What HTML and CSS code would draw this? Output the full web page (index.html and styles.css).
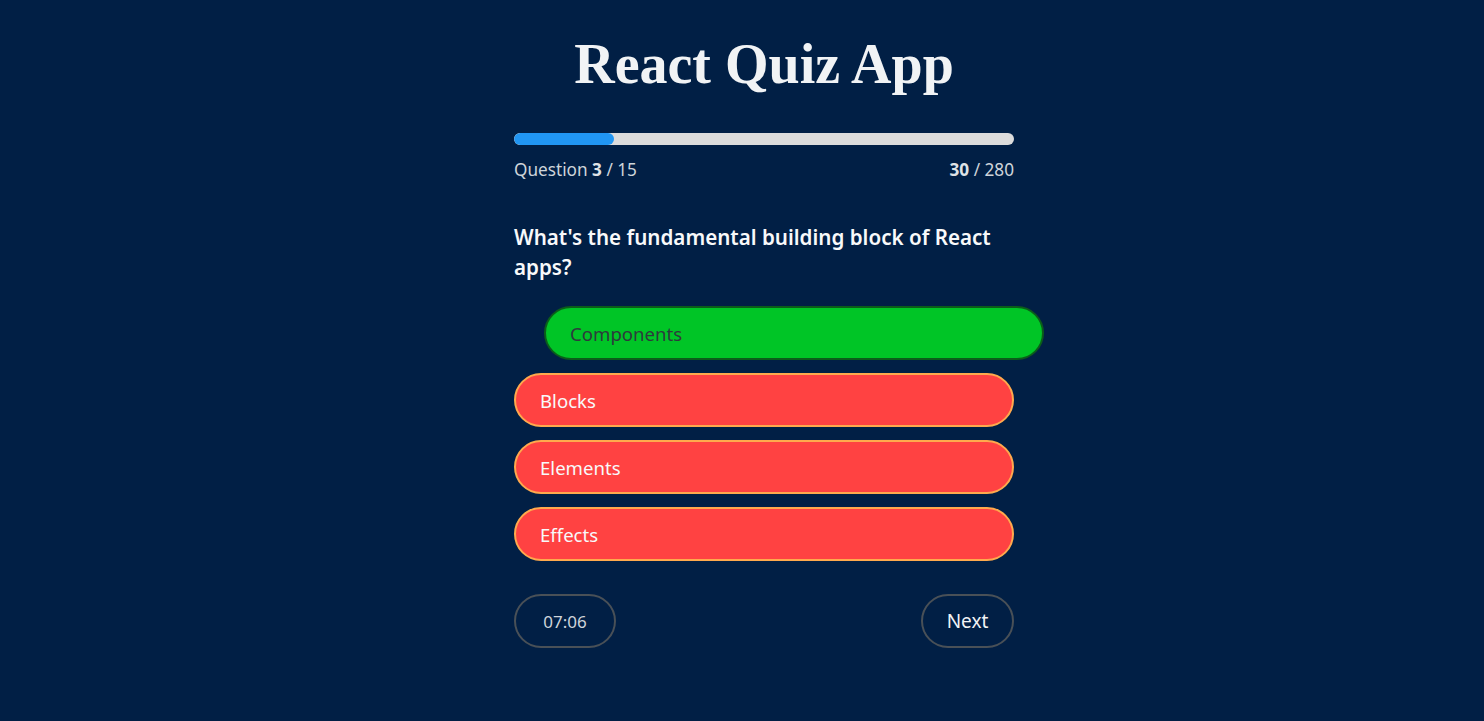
FILE: index.html
```html
<!DOCTYPE html>
<html lang="en">
<head>
<meta charset="utf-8">
<title>React Quiz App</title>
<link rel="stylesheet" href="styles.css">
</head>
<body>
<div class="app">
  <header class="app-header">
    <h1>React Quiz App</h1>
  </header>
  <main class="main">
    <div class="progress">
      <div class="progress-track"><div class="progress-fill" style="width: 20%"></div></div>
      <div class="progress-info">
        <span>Question <strong>3</strong> / 15</span>
        <span><strong>30</strong> / 280</span>
      </div>
    </div>
    <h4 class="question">What's the fundamental building block of React apps?</h4>
    <div class="options">
      <button class="option correct answer">Components</button>
      <button class="option wrong">Blocks</button>
      <button class="option wrong">Elements</button>
      <button class="option wrong">Effects</button>
    </div>
    <div class="footer">
      <div class="timer">07:06</div>
      <button class="btn-next">Next</button>
    </div>
  </main>
</div>
</body>
</html>
```

FILE: styles.css
```css
* { box-sizing: border-box; }
html, body { margin: 0; padding: 0; }
body {
  background: #011f45;
  color: #f1f3f5;
  font-family: "Noto Sans", "Open Sans", sans-serif;
  min-height: 100vh;
}
.app {
  display: flex;
  flex-direction: column;
  align-items: center;
  margin-left: 44px;
}
.app-header h1 {
  font-family: "Liberation Serif", "Times New Roman", serif;
  font-size: 56px;
  font-weight: 700;
  margin: 26px 0 0;
  line-height: 76px;
  color: #f1f3f5;
}
.main {
  width: 500px;
  margin-top: 31px;
}
.progress-track {
  height: 12px;
  background: #dcdcdc;
  border-radius: 6px;
  overflow: hidden;
}
.progress-fill {
  height: 100%;
  background: #2196f3;
  border-radius: 6px;
}
.progress-info {
  display: flex;
  justify-content: space-between;
  font-size: 17.2px;
  color: #ced4da;
  margin-top: 13px;
  line-height: 24px;
}
.progress-info strong { color: #dee2e6; }
.question {
  font-size: 20.6px;
  font-weight: 600;
  line-height: 30px;
  margin: 40px 0 24px;
  color: #f8f9fa;
}
.options {
  display: flex;
  flex-direction: column;
  gap: 13px;
}
.option {
  display: block;
  width: 100%;
  height: 54px;
  border-radius: 27px;
  text-align: left;
  padding: 0 24px;
  font-family: inherit;
  font-size: 18.6px;
  border: 2px solid #ffa94d;
  background: #ff4242;
  color: #f8f9fa;
  cursor: pointer;
}
.option.correct {
  background: #00c526;
  border-color: #0b5d1a;
  color: #2d3a3c;
}
.option.answer { transform: translateX(30px); }
.footer {
  display: flex;
  justify-content: space-between;
  margin-top: 33px;
}
.timer, .btn-next {
  height: 54px;
  border: 2px solid #495057;
  border-radius: 27px;
  font-family: inherit;
  font-size: 17px;
  color: #ced4da;
  display: flex;
  align-items: center;
  justify-content: center;
  background: transparent;
}
.timer { width: 102px; }
.btn-next {
  width: 93px;
  font-size: 19px;
  color: #f1f3f5;
  cursor: pointer;
}
```
